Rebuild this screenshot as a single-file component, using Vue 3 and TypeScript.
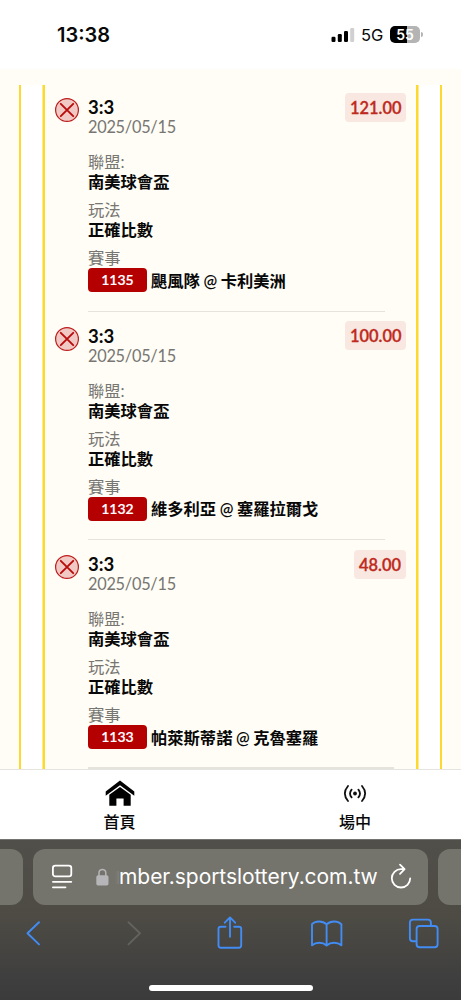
<script setup lang="ts">
interface Bet {
  score: string
  date: string
  odds: string
  code: string
  home: string
  away: string
}

const bets: Bet[] = [
  { score: '3:3', date: '2025/05/15', odds: '121.00', code: '1135', home: '颶風隊', away: '卡利美洲' },
  { score: '3:3', date: '2025/05/15', odds: '100.00', code: '1132', home: '維多利亞', away: '塞羅拉爾戈' },
  { score: '3:3', date: '2025/05/15', odds: '48.00', code: '1133', home: '帕萊斯蒂諾', away: '克魯塞羅' },
]
</script>

<template>
  <div class="screen">
    <header class="status">
      <span class="clock">13:38</span>
      <div class="indicators">
        <svg class="signal" width="24" height="16" viewBox="0 0 24 16">
          <rect x="0.5" y="9.8" width="4" height="5.2" rx="1.2" />
          <rect x="6.8" y="7" width="4" height="8" rx="1.2" />
          <rect x="13" y="4" width="4" height="11" rx="1.2" />
          <rect x="19.2" y="1" width="4" height="14" rx="1.2" fill="#d0d0d0" />
        </svg>
        <span class="network">5G</span>
        <div class="battery"><span>55</span></div>
        <i class="nub"></i>
      </div>
    </header>

    <main class="content">
      <div class="outer">
        <div class="inner">
          <article v-for="bet in bets" :key="bet.code" class="bet">
            <svg class="lost" width="26" height="26" viewBox="0 0 26 26">
              <circle cx="13" cy="13" r="11.4" fill="#f1c9c4" stroke="#bd1c1c" stroke-width="1.2" />
              <path d="M6.8 6.8 19.2 19.2M19.2 6.8 6.8 19.2" stroke="#b90c0c" stroke-width="1.9" stroke-linecap="round" />
            </svg>
            <div class="details">
              <div class="score">{{ bet.score }}</div>
              <div class="date">{{ bet.date }}</div>
              <div class="label first">聯盟:</div>
              <div class="value">南美球會盃</div>
              <div class="label">玩法</div>
              <div class="value">正確比數</div>
              <div class="label">賽事</div>
              <div class="match">
                <span class="code">{{ bet.code }}</span>
                <span class="teams">{{ bet.home }}<span class="at">@</span>{{ bet.away }}</span>
              </div>
              <div class="divider"></div>
            </div>
            <span class="odds">{{ bet.odds }}</span>
          </article>
        </div>
      </div>
    </main>

    <nav class="tabs">
      <div class="tab home">
        <svg width="30" height="28" viewBox="0 0 30 28">
          <path d="M.7 11.4 15 .4 29.3 11.4V15.8L15 5.2.7 15.8Z" />
          <path d="M4.3 14.8 15 7.1 25.7 14.8V25.7H18.6V18.6H11.4V25.7H4.3Z" />
        </svg>
        <span>首頁</span>
      </div>
      <div class="tab live">
        <svg width="24" height="28" viewBox="0 0 24 28" fill="none" stroke="#111" stroke-width="1.8" stroke-linecap="round">
          <circle cx="12" cy="13.5" r="1.9" fill="#111" stroke="none" />
          <path d="M8.6 9.6Q5.4 13.5 8.6 17.4M15.4 9.6Q18.6 13.5 15.4 17.4M5 6Q-1.3 13.5 5 21M19 6Q25.3 13.5 19 21" />
        </svg>
        <span>場中</span>
      </div>
    </nav>

    <footer class="browser">
      <div class="addresses">
        <div class="side left"></div>
        <div class="address">
          <svg class="reader" width="22" height="26" viewBox="0 0 22 26" fill="none" stroke="#fff" stroke-width="1.8" stroke-linecap="round">
            <rect x="1.9" y="1.6" width="18.4" height="10.8" rx="2.4" />
            <path d="M1.9 17.8H20.3M1.9 23.3H14.5" />
          </svg>
          <svg class="lock" width="13" height="18" viewBox="0 0 13 18">
            <path d="M3 8V4.8a3.3 3.3 0 0 1 6.8 0V8" fill="none" stroke="#b6b6b9" stroke-width="1.5" />
            <rect x=".3" y="7.3" width="12.2" height="10.2" rx="1.8" fill="#b6b6b9" />
          </svg>
          <i class="fade"></i>
          <span class="url">mber.sportslottery.com.tw</span>
          <svg class="reload" width="22" height="26" viewBox="0 0 22 26" fill="none" stroke="#fff" stroke-width="1.8" stroke-linecap="round" stroke-linejoin="round">
            <path d="M14.2 6.1H11A9.2 9.2 0 1 0 20.2 15.3M10 1.7 14.6 6.2 10 10.8" />
          </svg>
        </div>
        <div class="side right"></div>
      </div>
      <svg class="tools" width="461" height="40" viewBox="0 0 461 40" fill="none" stroke="#428cf4" stroke-width="1.9" stroke-linecap="round" stroke-linejoin="round">
        <path d="M39 9.2 27.5 20.3 39 31.4" />
        <path d="M128.5 9.2 140 20.3 128.5 31.4" stroke="#62625f" />
        <path d="M225.5 13.7H220.8Q218.5 13.7 218.5 16V32.2Q218.5 34.7 221 34.7H238.8Q241.2 34.7 241.2 32.2V16Q241.2 13.7 239 13.7H234.2M230 23.8V4.6M224.8 9.7 230 4.4 235.2 9.7" />
        <path d="M326.6 11.4C322.5 7.4 315.5 7.6 312 11.2V32.3C316 29 322.5 28.8 326.6 32.5 330.8 28.8 337.5 29 341.4 32.3V11.2C337.7 7.6 330.8 7.4 326.6 11.4ZM326.6 11.4V32.2" />
        <path d="M416.3 28.3H413Q409.9 28.3 409.9 25.2V9.7Q409.9 6.6 413 6.6H427.8Q430.9 6.6 430.9 9.7V12.6" />
        <rect x="416.6" y="13" width="21" height="21.2" rx="3" />
      </svg>
      <div class="indicator"></div>
    </footer>
  </div>
</template>

<style>
body {
  margin: 0;
}
</style>

<style scoped>
.screen {
  width: 461px;
  height: 1000px;
  display: flex;
  flex-direction: column;
  overflow: hidden;
  background: #fff;
  color: #080808;
  font-family: Lato, 'Noto Sans CJK TC', sans-serif;
}
.screen * {
  box-sizing: border-box;
}
.status {
  height: 69px;
  flex: none;
  display: flex;
  justify-content: space-between;
  padding: 22px 38px 0 57px;
  font-family: Inter, sans-serif;
}
.clock {
  font-size: 20px;
  font-weight: 600;
  line-height: 26px;
}
.indicators {
  display: flex;
  align-items: center;
  height: 25px;
}
.signal {
  margin-right: 6px;
}
.network {
  width: 29px;
  font-size: 16.5px;
  font-weight: 400;
  letter-spacing: -0.1px;
}
.battery {
  width: 30px;
  height: 17px;
  border-radius: 5px;
  background: linear-gradient(90deg, #000 56%, #b4b4b4 56%);
  color: #fff;
  font-size: 14px;
  font-weight: 600;
  line-height: 17px;
  text-align: center;
}
.nub {
  width: 2px;
  height: 5px;
  margin-left: 1px;
  border-radius: 0 2px 2px 0;
  background: #b4b4b4;
}
.content {
  height: 700px;
  flex: none;
  padding: 16px 19px 0;
  overflow: hidden;
  background: #fffdf5;
}
.outer {
  height: 684px;
  padding: 0 22px;
  border: solid #fdd92f;
  border-width: 0 2px;
  background: #fff;
}
.inner {
  height: 684px;
  border: solid #fdd92f;
  border-width: 0 2px;
  background: #fffdf5;
  box-shadow: -1px 0 0 #fdeb90, 1px 0 0 #fdeb90;
}
.bet {
  height: 228.5px;
  display: flex;
  align-items: flex-start;
}
.lost {
  flex: none;
  margin: 12px 8px 0 9px;
}
.details {
  width: 257px;
  flex: none;
  padding-top: 12px;
}
.score {
  height: 20px;
  font-size: 18.5px;
  font-weight: 700;
  line-height: 20px;
}
.date {
  height: 20px;
  font-size: 16.3px;
  line-height: 20px;
  letter-spacing: -0.24px;
  color: #777673;
}
.label {
  height: 20px;
  margin-top: 8px;
  font-size: 16.3px;
  line-height: 20px;
  color: #777673;
}
.label.first {
  margin-top: 15px;
}
.value {
  height: 20px;
  font-size: 16.3px;
  font-weight: 700;
  line-height: 20px;
}
.match {
  display: flex;
  height: 24px;
  align-items: center;
  white-space: nowrap;
}
.code {
  width: 59px;
  height: 24px;
  flex: none;
  margin-right: 4px;
  border-radius: 4px;
  background: #b40000;
  color: #fff;
  font-size: 14px;
  font-weight: 600;
  line-height: 24px;
  text-align: center;
  -webkit-text-stroke: 0.2px #fff;
}
.teams {
  font-size: 16.3px;
  font-weight: 700;
  line-height: 25px;
}
.at {
  display: inline-block;
  width: 20.8px;
  text-align: center;
  font-size: 16.3px;
  font-weight: 600;
}
.divider {
  width: 297px;
  height: 1px;
  margin-top: 18.5px;
  background: #e5e3de;
}
.bet:last-child .divider {
  width: 306px;
  height: 2px;
  margin-top: 17.5px;
}
.odds {
  height: 29px;
  margin: 7.5px 10px 0 auto;
  padding: 0 5px;
  border-radius: 4px;
  background: #f8e8e1;
  color: #be2a20;
  font-size: 16.4px;
  font-weight: 600;
  line-height: 30px;
  -webkit-text-stroke: 0.3px #be2a20;
}
.tabs {
  height: 70px;
  flex: none;
  display: grid;
  grid-template-columns: 239px 1fr;
  border-top: 1px solid #e5e4e1;
  background: #fff;
}
.tab {
  display: flex;
  flex-direction: column;
  align-items: center;
  padding-top: 10px;
  font-size: 16px;
  font-weight: 500;
}
.tab.live {
  margin-left: 10px;
}
.tab span {
  margin-top: 3px;
  line-height: 21px;
}
.browser {
  height: 161px;
  flex: none;
  border-top: 1px solid #737370;
  background: linear-gradient(#514f49, #4d4b44 48%, #3f3f3f 85%, #3b3b3b);
}
.addresses {
  display: flex;
  gap: 10px;
  padding-top: 9px;
}
.side {
  width: 23px;
  height: 56px;
  flex: none;
  border-radius: 0 12px 12px 0;
  background: #74736c;
}
.side.right {
  border-radius: 12px 0 0 12px;
}
.address {
  width: 395px;
  height: 56px;
  flex: none;
  display: flex;
  align-items: center;
  border-radius: 12px;
  background: #74736c;
}
.reader {
  margin-left: 18px;
}
.lock {
  margin: -1px 6px 0 23px;
}
.fade {
  width: 4px;
  height: 13px;
  background: linear-gradient(90deg, transparent, rgba(255, 255, 255, 0.08));
}
.url {
  width: 258px;
  flex: none;
  color: #fff;
  font-family: Inter, sans-serif;
  font-size: 21px;
  line-height: 28px;
  letter-spacing: -0.06px;
  white-space: nowrap;
}
.reload {
  flex: none;
  margin: -2px 0 0 12.5px;
}
.tools {
  display: block;
  margin-top: 8px;
}
.indicator {
  width: 164px;
  height: 6px;
  margin: 32px 0 0 148.5px;
  border-radius: 3px;
  background: #fff;
}
</style>
